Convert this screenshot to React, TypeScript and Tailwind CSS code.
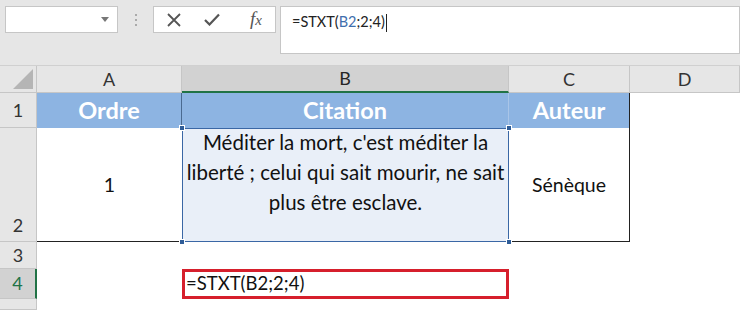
import React from 'react';

const font = { fontFamily: 'Lato, "Noto Sans", sans-serif' };

const Handle: React.FC<{ pos: string }> = ({ pos }) => (
  <span className={`absolute w-[6px] h-[6px] bg-[#2f5d98] border border-white ${pos}`} />
);

const ColHead: React.FC<{ label: string; active?: boolean }> = ({ label, active }) => (
  <div
    className={`flex items-center justify-center text-[18px] border-r border-[#c6c6c6] ${
      active ? 'bg-[#d2d2d2] border-b-2 border-b-[#217346] text-[#262626]' : 'bg-[#e6e6e6] border-b border-b-[#c6c6c6] text-[#333]'
    }`}
  >
    {label}
  </div>
);

const RowHead: React.FC<{ label?: string; active?: boolean; bottom?: boolean }> = ({ label, active, bottom }) => (
  <div
    className={`flex justify-center text-[18px] border-b border-[#c6c6c6] ${bottom ? 'items-end pb-[2px]' : 'items-center'} ${
      active ? 'bg-[#d2d2d2] text-[#217346] border-r-2 border-r-[#217346]' : 'bg-[#e6e6e6] text-[#333] border-r border-r-[#c6c6c6]'
    }`}
  >
    {label}
  </div>
);

export default function App() {
  return (
    <div className="w-[740px] h-[310px] overflow-hidden bg-white" style={font}>
      {/* formula bar */}
      <div className="h-[66px] bg-[#e6e6e6] flex items-start pt-[6px] pl-[5px] border-b border-[#d0d0d0]">
        <div className="w-[113px] h-[27px] bg-white border border-[#c6c6c6] flex items-center justify-end pr-[8px]">
          <svg width="8" height="5" viewBox="0 0 8 5">
            <path d="M0 0h8L4 5z" fill="#777" />
          </svg>
        </div>
        <div className="w-[35px] h-[27px] flex flex-col items-center justify-center gap-[3px]">
          <span className="w-[2px] h-[2px] bg-[#aaa]" />
          <span className="w-[2px] h-[2px] bg-[#aaa]" />
          <span className="w-[2px] h-[2px] bg-[#aaa]" />
        </div>
        <div className="w-[123px] h-[27px] bg-white border border-[#c6c6c6] flex items-center">
          <svg width="14" height="14" viewBox="0 0 14 14" className="ml-[13px]">
            <path d="M1 1l12 12M13 1L1 13" stroke="#555" strokeWidth="1.8" />
          </svg>
          <svg width="16" height="13" viewBox="0 0 16 13" className="ml-[23px]">
            <path d="M1 7l4.5 4.5L15 1.5" stroke="#555" strokeWidth="2.2" fill="none" />
          </svg>
          <span className="ml-[30px] text-[19px] italic text-[#555]" style={{ fontFamily: '"Liberation Serif", serif' }}>
            f<span className="text-[15px]">x</span>
          </span>
        </div>
        <div className="ml-[4px] flex-1 h-[48px] bg-white border border-[#c6c6c6] pl-[11px] pt-[2px]">
          <span className="text-[14.5px] text-[#222] leading-[22px]">
            =STXT(<span className="text-[#3f6fad]">B2</span>;2;4)
          </span>
          <span className="inline-block w-[1px] h-[18px] bg-[#222] align-middle ml-[1px]" />
        </div>
      </div>

      {/* sheet */}
      <div className="grid grid-cols-[37px_145px_327px_121px_110px] grid-rows-[27px_35px_114px_27px_30px_11px] text-[#111]">
        <div className="bg-[#e6e6e6] border-r border-b border-[#c6c6c6] flex items-end justify-end p-[3px]">
          <svg width="20" height="20" viewBox="0 0 20 20">
            <path d="M20 0V20H0z" fill="#b5b5b5" />
          </svg>
        </div>
        <ColHead label="A" />
        <ColHead label="B" active />
        <ColHead label="C" />
        <ColHead label="D" />

        <RowHead label="1" />
        <div className="bg-[#8db4e2] border-r border-[#4a6a90] flex items-center justify-center text-white font-bold text-[23.5px]">Ordre</div>
        <div className="bg-[#8db4e2] border-r border-[#a9c5e8] flex items-center justify-center text-white font-bold text-[23.5px]">Citation</div>
        <div className="bg-[#8db4e2] border-r border-[#222] flex items-center justify-center text-white font-bold text-[23.5px]">Auteur</div>
        <div />

        <RowHead label="2" bottom />
        <div className="border-b border-[#222] flex items-center justify-center text-[19.5px]">1</div>
        <div className="relative bg-[#e9eff8] border border-[#3a67a5] flex justify-center">
          <p className="text-center text-[20.5px] leading-[30px] whitespace-nowrap -mt-[2px]">
            Méditer la mort, c'est méditer la
            <br />
            liberté ; celui qui sait mourir, ne sait
            <br />
            plus être esclave.
          </p>
          <Handle pos="-left-[4px] -top-[4px]" />
          <Handle pos="-right-[4px] -top-[4px]" />
          <Handle pos="-left-[4px] -bottom-[4px]" />
          <Handle pos="-right-[4px] -bottom-[4px]" />
        </div>
        <div className="border-r border-b border-[#222] flex items-center justify-center text-[19.5px]">Sénèque</div>
        <div />

        <RowHead label="3" />
        <div />
        <div />
        <div />
        <div />

        <RowHead label="4" active />
        <div />
        <div className="border-[3px] border-[#d61f2c] flex items-center pl-[1px] text-[18.5px]">=STXT(B2;2;4)</div>
        <div />
        <div />

        <RowHead />
        <div />
        <div />
        <div />
        <div />
      </div>
    </div>
  );
}
